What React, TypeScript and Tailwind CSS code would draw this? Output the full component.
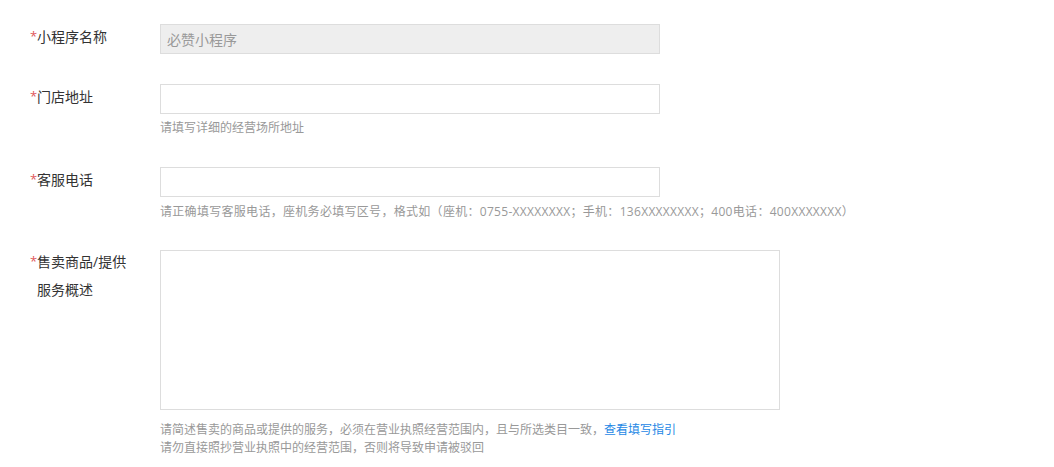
import React from 'react'

const FONT = "font-['Open_Sans','Noto_Sans_CJK_SC',sans-serif]"

function Label({ children, multi }: { children: React.ReactNode; multi?: boolean }) {
  return (
    <div className="w-[130px] shrink-0">
      <div className={`relative pl-[7px] text-sm text-[#333] -mt-[2px] ${multi ? 'leading-[28px] w-[102px]' : 'leading-[30px]'}`}>
        <span className="absolute left-0 top-[-1px] text-[13px] text-[#e0585b]">*</span>
        {children}
      </div>
    </div>
  )
}

function Hint({ children, className = '' }: { children: React.ReactNode; className?: string }) {
  return <p className={`text-xs leading-[18px] text-[#999] ${className}`}>{children}</p>
}

export default function App() {
  return (
    <div className={`${FONT} bg-white min-h-[467px] pt-6 pl-[30px]`}>
      <div className="flex mb-[30px]">
        <Label>小程序名称</Label>
        <input
          disabled
          value="必赞小程序"
          readOnly
          className="w-[500px] h-[30px] border border-[#ddd] bg-[#eee] px-[6px] text-sm text-[#999] outline-none"
        />
      </div>

      <div className="flex mb-[30px]">
        <Label>门店地址</Label>
        <div>
          <input className="w-[500px] h-[30px] border border-[#ddd] bg-white px-[6px] text-sm outline-none" />
          <Hint className="mt-[5px]">请填写详细的经营场所地址</Hint>
        </div>
      </div>

      <div className="flex mb-[29px]">
        <Label>客服电话</Label>
        <div>
          <input className="w-[500px] h-[30px] border border-[#ddd] bg-white px-[6px] text-sm outline-none" />
          <Hint className="mt-[6px] tracking-[0.3px] whitespace-nowrap">
            请正确填写客服电话，座机务必填写区号，格式如（座机：0755-XXXXXXXX；手机：136XXXXXXXX；400电话：400XXXXXXX）
          </Hint>
        </div>
      </div>

      <div className="flex">
        <Label multi>售卖商品/提供服务概述</Label>
        <div>
          <textarea className="block w-[620px] h-[160px] border border-[#ddd] bg-white p-[6px] text-sm outline-none resize-none" />
          <Hint className="mt-[11px]">
            请简述售卖的商品或提供的服务，必须在营业执照经营范围内，且与所选类目一致，
            <a className="text-[#1e88e5]">查看填写指引</a>
          </Hint>
          <Hint>请勿直接照抄营业执照中的经营范围，否则将导致申请被驳回</Hint>
        </div>
      </div>
    </div>
  )
}
